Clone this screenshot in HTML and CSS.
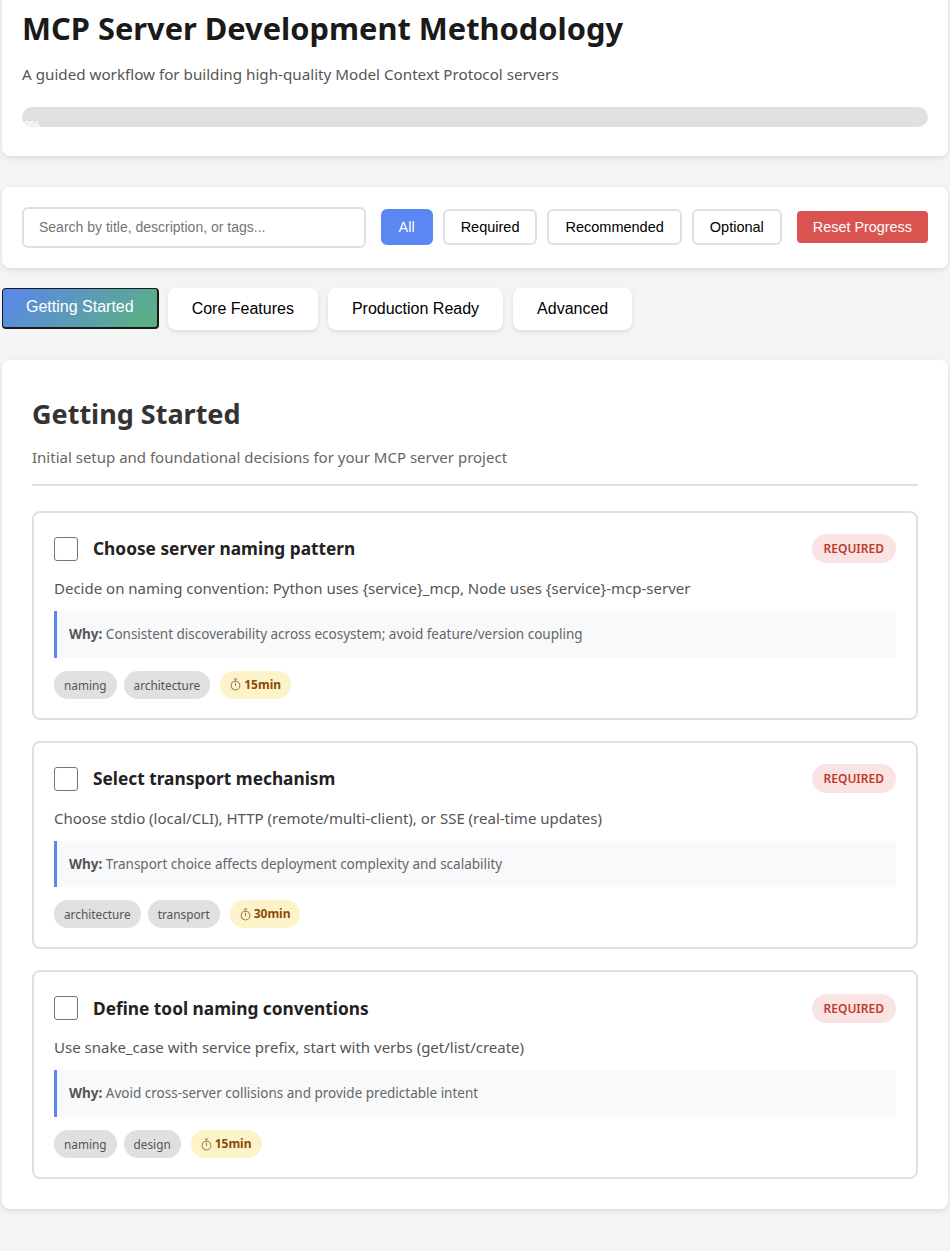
FILE: index.html
```html
<!DOCTYPE html>
<html lang="en">
<head>
<meta charset="utf-8">
<title>MCP Server Development Methodology</title>
<link rel="stylesheet" href="styles.css">
</head>
<body>
<div class="container">
  <header class="header card-box">
    <h1 class="title">MCP Server Development Methodology</h1>
    <p class="subtitle">A guided workflow for building high-quality Model Context Protocol servers</p>
    <div class="progress">
      <div class="progress-fill" style="width:0%"><span class="progress-label">0%</span></div>
    </div>
  </header>

  <section class="controls card-box">
    <input class="search" type="text" placeholder="Search by title, description, or tags...">
    <div class="filters">
      <button class="filter-btn active">All</button>
      <button class="filter-btn">Required</button>
      <button class="filter-btn">Recommended</button>
      <button class="filter-btn">Optional</button>
    </div>
    <button class="reset-btn">Reset Progress</button>
  </section>

  <nav class="tabs">
    <button class="tab active">Getting Started</button>
    <button class="tab">Core Features</button>
    <button class="tab">Production Ready</button>
    <button class="tab">Advanced</button>
  </nav>

  <main class="phase card-box">
    <h2 class="phase-title">Getting Started</h2>
    <p class="phase-desc">Initial setup and foundational decisions for your MCP server project</p>

    <div class="items">
      <article class="item">
        <div class="item-head">
          <span class="checkbox"></span>
          <h3 class="item-title">Choose server naming pattern</h3>
          <span class="badge">REQUIRED</span>
        </div>
        <p class="item-desc">Decide on naming convention: Python uses {service}_mcp, Node uses {service}-mcp-server</p>
        <div class="why"><strong>Why:</strong> Consistent discoverability across ecosystem; avoid feature/version coupling</div>
        <div class="tags">
          <span class="tag">naming</span>
          <span class="tag">architecture</span>
          <span class="time"><svg class="clock" viewBox="0 0 12 14" aria-hidden="true"><path d="M4.5 1h3M6 1v2"/><circle cx="6" cy="8.2" r="4.8"/><path d="M6 8.2V5.4"/></svg>15min</span>
        </div>
      </article>

      <article class="item">
        <div class="item-head">
          <span class="checkbox"></span>
          <h3 class="item-title">Select transport mechanism</h3>
          <span class="badge">REQUIRED</span>
        </div>
        <p class="item-desc">Choose stdio (local/CLI), HTTP (remote/multi-client), or SSE (real-time updates)</p>
        <div class="why"><strong>Why:</strong> Transport choice affects deployment complexity and scalability</div>
        <div class="tags">
          <span class="tag">architecture</span>
          <span class="tag">transport</span>
          <span class="time"><svg class="clock" viewBox="0 0 12 14" aria-hidden="true"><path d="M4.5 1h3M6 1v2"/><circle cx="6" cy="8.2" r="4.8"/><path d="M6 8.2V5.4"/></svg>30min</span>
        </div>
      </article>

      <article class="item">
        <div class="item-head">
          <span class="checkbox"></span>
          <h3 class="item-title">Define tool naming conventions</h3>
          <span class="badge">REQUIRED</span>
        </div>
        <p class="item-desc">Use snake_case with service prefix, start with verbs (get/list/create)</p>
        <div class="why"><strong>Why:</strong> Avoid cross-server collisions and provide predictable intent</div>
        <div class="tags">
          <span class="tag">naming</span>
          <span class="tag">design</span>
          <span class="time"><svg class="clock" viewBox="0 0 12 14" aria-hidden="true"><path d="M4.5 1h3M6 1v2"/><circle cx="6" cy="8.2" r="4.8"/><path d="M6 8.2V5.4"/></svg>15min</span>
        </div>
      </article>
    </div>
  </main>
</div>
</body>
</html>
```

FILE: styles.css
```css
* { box-sizing: border-box; }

html, body {
  margin: 0;
  padding: 0;
  background: #f4f4f4;
}

body {
  font-family: "Noto Sans", "Open Sans", sans-serif;
  color: #333;
}

.container {
  padding: 0 2px 40px;
  margin-top: -20px;
}

.card-box {
  background: #fff;
  border-radius: 8px;
  box-shadow: 0 2px 5px rgba(0, 0, 0, 0.1);
}

/* Header */
.header {
  padding: 30px 20px 29px;
  margin-bottom: 31px;
}

.title {
  margin: 0;
  font-size: 30.8px;
  line-height: 1.2;
  font-weight: 700;
  color: #1a1a1a;
}

.subtitle {
  margin: 16px 0 22px;
  font-size: 15.2px;
  line-height: 1.45;
  color: #555;
}

.progress {
  height: 20px;
  background: #e0e0e0;
  border-radius: 10px;
}

.progress-fill {
  height: 100%;
  padding-top: 13px;
  white-space: nowrap;
  font-family: "Liberation Sans", Arial, sans-serif;
  font-size: 11px;
  font-weight: 700;
  line-height: 1;
  color: #fff;
}

.progress-label { padding-left: 2px; }

/* Controls */
.controls {
  display: flex;
  align-items: center;
  gap: 15px;
  padding: 20px;
  margin-bottom: 20px;
}

.search {
  flex: 1;
  min-width: 0;
  height: 41px;
  padding: 0 15px;
  border: 2px solid #e0e0e0;
  border-radius: 6px;
  font-family: "Liberation Sans", Arial, sans-serif;
  font-size: 14px;
  color: #333;
  outline: none;
}

.search::placeholder { color: #757575; }

.filters {
  display: flex;
  gap: 10px;
}

.filter-btn {
  height: 36px;
  padding: 0 16px;
  border: 2px solid #e0e0e0;
  border-radius: 6px;
  background: #fff;
  font-family: "Liberation Sans", Arial, sans-serif;
  font-size: 14.5px;
  color: #000;
}

.filter-btn.active {
  background: #5a87f2;
  border-color: #5a87f2;
  color: #fff;
}

.reset-btn {
  height: 32px;
  padding: 0 16px;
  border: none;
  border-radius: 4px;
  background: #d9534f;
  font-family: "Liberation Sans", Arial, sans-serif;
  font-size: 14.4px;
  color: #fff;
}

/* Tabs */
.tabs {
  display: flex;
  align-items: flex-start;
  gap: 10px;
  margin-bottom: 30px;
}

.tab {
  height: 42px;
  padding: 0 24px;
  border: none;
  border-radius: 8px;
  background: #fff;
  box-shadow: 0 2px 4px rgba(0, 0, 0, 0.1);
  font-family: "Liberation Sans", Arial, sans-serif;
  font-size: 16px;
  color: #000;
}

.tab.active {
  height: 41px;
  padding: 0 23px 2px;
  margin-right: -1px;
  background: linear-gradient(135deg, #5a86ee 0%, #5bb27c 100%);
  border-style: solid;
  border-color: #1a1a1a;
  border-width: 1px 2px 2px 1px;
  border-radius: 4px;
  box-shadow: none;
  color: #fff;
}

/* Phase */
.phase {
  padding: 30px 30px 30px;
}

.phase-title {
  margin: 6px 0 0;
  font-size: 27px;
  line-height: 1.3;
  font-weight: 700;
  color: #333;
}

.phase-desc {
  margin: 15px 0 0;
  padding-bottom: 15px;
  border-bottom: 2px solid #e0e0e0;
  font-size: 15px;
  line-height: 1.5;
  color: #666;
}

.items {
  display: flex;
  flex-direction: column;
  gap: 21px;
  margin-top: 25px;
}

.item {
  border: 2px solid #e0e0e0;
  border-radius: 8px;
  padding: 21px 20px 19px;
}

.item-head {
  display: flex;
  align-items: center;
  gap: 15px;
  height: 30px;
}

.checkbox {
  flex: none;
  width: 24px;
  height: 24px;
  border: 1.5px solid #767676;
  border-radius: 3px;
  background: #fff;
}

.item-title {
  flex: 1;
  margin: 0;
  font-size: 17.3px;
  font-weight: 700;
  color: #222;
}

.badge {
  padding: 5px 12px;
  border-radius: 15px;
  background: #fae3e3;
  color: #c0392b;
  font-size: 12px;
  font-weight: 600;
  line-height: 19px;
}

.item-desc {
  margin: 12px 0 0;
  font-size: 15px;
  line-height: 1.6;
  color: #555;
}

.why {
  margin-top: 11px;
  padding: 13px 12px;
  background: #f8f9fa;
  border-left: 3px solid #5a87f2;
  font-size: 13.5px;
  line-height: 1.55;
  color: #666;
}

.why strong {
  color: #555;
}

.tags {
  display: flex;
  align-items: center;
  gap: 7px;
  margin-top: 13px;
}

.tag {
  height: 28px;
  padding: 0 10px;
  border-radius: 14px;
  background: #e0e0e0;
  font-size: 11.8px;
  line-height: 28px;
  color: #555;
}

.time {
  display: flex;
  align-items: center;
  gap: 3px;
  margin-left: 3px;
  height: 28px;
  padding: 0 10px;
  border-radius: 14px;
  background: #fdf3c8;
  font-size: 12px;
  font-weight: 700;
  line-height: 28px;
  color: #8a4b08;
}

.clock {
  width: 11px;
  height: 13px;
  fill: none;
  stroke: #a08660;
  stroke-width: 1.2;
  stroke-linecap: round;
}
```
